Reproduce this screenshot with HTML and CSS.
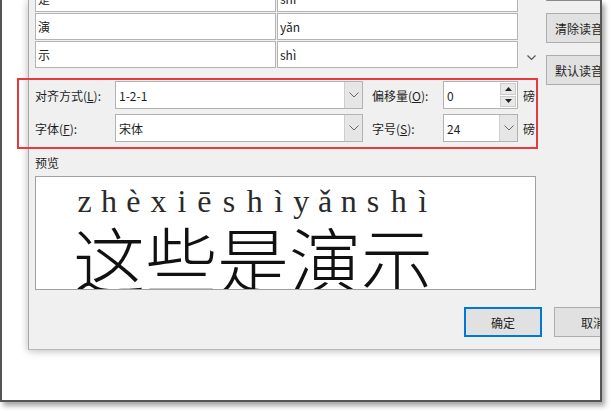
FILE: index.html
```html
<!DOCTYPE html>
<html>
<head>
<meta charset="utf-8">
<link rel="stylesheet" href="styles.css">
</head>
<body>
<div class="frame">
  <div class="dialog">
    <div class="top">
      <div class="grid">
        <div class="cell">是</div><div class="cell">shì</div>
        <div class="cell">演</div><div class="cell">yǎn</div>
        <div class="cell">示</div><div class="cell">shì</div>
      </div>
      <div class="scroll">
        <svg class="chev" width="9" height="6" viewBox="0 0 9 6"><polyline points="0.5,0.5 4.5,4.5 8.5,0.5" fill="none" stroke="#555" stroke-width="1.2"/></svg>
      </div>
      <div class="side">
        <div class="btn side-btn first"></div>
        <div class="btn side-btn">清除读音</div>
        <div class="btn side-btn">默认读音</div>
      </div>
    </div>

    <div class="form">
      <div class="row">
        <span class="label">对齐方式(<u>L</u>):</span>
        <div class="combo wide"><span class="val">1-2-1</span><span class="drop"><svg width="10" height="6" viewBox="0 0 10 6"><polyline points="0.5,0.5 5,5 9.5,0.5" fill="none" stroke="#666" stroke-width="1"/></svg></span></div>
        <span class="label label2">偏移量(<u>O</u>):</span>
        <div class="combo small"><span class="val">0</span><span class="spin"><span class="sb"><svg width="7" height="4" viewBox="0 0 7 4"><polygon points="3.5,0 7,4 0,4" fill="#222"/></svg></span><span class="sb"><svg width="7" height="4" viewBox="0 0 7 4"><polygon points="0,0 7,0 3.5,4" fill="#222"/></svg></span></span></div>
        <span class="unit">磅</span>
      </div>
      <div class="row">
        <span class="label">字体(<u>F</u>):</span>
        <div class="combo wide"><span class="val">宋体</span><span class="drop"><svg width="10" height="6" viewBox="0 0 10 6"><polyline points="0.5,0.5 5,5 9.5,0.5" fill="none" stroke="#666" stroke-width="1"/></svg></span></div>
        <span class="label label2">字号(<u>S</u>):</span>
        <div class="combo small"><span class="val">24</span><span class="drop"><svg width="10" height="6" viewBox="0 0 10 6"><polyline points="0.5,0.5 5,5 9.5,0.5" fill="none" stroke="#666" stroke-width="1"/></svg></span></div>
        <span class="unit">磅</span>
      </div>
    </div>

    <div class="plabel">预览</div>
    <div class="preview">
      <div class="ruby"><div class="py"><span>z</span><span>h</span><span>è</span></div><div class="hz">这</div></div>
      <div class="ruby"><div class="py"><span>x</span><span>i</span><span>ē</span></div><div class="hz">些</div></div>
      <div class="ruby"><div class="py"><span>s</span><span>h</span><span>ì</span></div><div class="hz">是</div></div>
      <div class="ruby"><div class="py"><span>y</span><span>ǎ</span><span>n</span></div><div class="hz">演</div></div>
      <div class="ruby"><div class="py"><span>s</span><span>h</span><span>ì</span></div><div class="hz">示</div></div>
    </div>

    <div class="actions">
      <div class="btn ok">确定</div>
      <div class="btn">取消</div>
    </div>
  </div>
</div>
<div class="mark"></div>
</body>
</html>
```
FILE: styles.css
```css
html, body {
  margin: 0;
  padding: 0;
}
body {
  width: 611px;
  height: 411px;
  overflow: hidden;
  background: #ffffff;
  font-family: "Noto Sans CJK SC", "Noto Sans", sans-serif;
  font-size: 12px;
  color: #1e1e1e;
}
.frame {
  width: 602px;
  height: 402px;
  box-sizing: border-box;
  border: 2px solid #555555;
  border-top: 0;
  background: #ffffff;
  box-shadow: 3px 4px 5px rgba(0, 0, 0, 0.35);
  overflow: hidden;
}
.dialog {
  margin-left: 26px;
  width: 616px;
  height: 350px;
  box-sizing: border-box;
  background: #f0f0f0;
  border-left: 1px solid #a8a8a8;
  border-bottom: 1px solid #b8b8b8;
  box-shadow: 0 1px 8px rgba(0, 0, 0, 0.28);
  padding: 0 12px 0 6px;
  display: flex;
  flex-direction: column;
}
.top {
  display: flex;
  align-items: flex-start;
  height: 83px;
  margin-top: -15px;
  flex-shrink: 0;
}
.grid {
  display: grid;
  grid-template-columns: 241px 241px;
  grid-auto-rows: 27px;
  gap: 1px;
  width: 483px;
}
.cell {
  box-sizing: border-box;
  border: 1px solid #b4b4b4;
  background: #ffffff;
  padding-left: 2px;
  line-height: 25px;
  font-size: 12px;
  color: #222;
}
.scroll {
  width: 28px;
  height: 83px;
  display: flex;
  align-items: flex-end;
  justify-content: center;
}
.chev {
  margin-bottom: 7px;
  margin-right: 2px;
}
.side {
  display: flex;
  flex-direction: column;
  gap: 12px;
  margin-top: -14px;
}
.btn {
  box-sizing: border-box;
  height: 30px;
  background: #e1e1e1;
  border: 1px solid #adadad;
  display: flex;
  align-items: center;
  justify-content: center;
  font-size: 12px;
  color: #1e1e1e;
}
.side-btn {
  width: 66px;
}
.side-btn.first {
  border-bottom-color: #8a8a8a;
}
.form {
  display: flex;
  flex-direction: column;
  gap: 5px;
  margin-top: 13px;
  flex-shrink: 0;
}
.row {
  display: flex;
  align-items: center;
  height: 28px;
}
.label {
  width: 80px;
  white-space: nowrap;
}
.label2 {
  width: 71px;
  margin-left: 9px;
}
.combo {
  box-sizing: border-box;
  height: 28px;
  border: 1px solid #b2b2b2;
  background: #ffffff;
  display: flex;
  align-items: stretch;
}
.wide {
  width: 248px;
}
.small {
  width: 75px;
}
.val {
  flex: 1;
  padding-left: 3px;
  display: flex;
  align-items: center;
}
.drop {
  width: 17px;
  background: #e6e6e6;
  border-left: 1px solid #cfcfcf;
  display: flex;
  align-items: center;
  justify-content: center;
}
.spin {
  width: 16px;
  display: flex;
  flex-direction: column;
  gap: 1px;
  padding: 1px;
}
.sb {
  flex: 1;
  background: #e8e8e8;
  border: 1px solid #cccccc;
  display: flex;
  align-items: center;
  justify-content: center;
}
.unit {
  margin-left: 5px;
}
.plabel {
  margin-top: 13px;
  line-height: 16px;
  flex-shrink: 0;
}
.preview {
  margin-top: 5px;
  width: 501px;
  height: 114px;
  box-sizing: border-box;
  border: 1px solid #a0a0a0;
  background: #ffffff;
  overflow: hidden;
  padding-left: 37px;
  padding-top: 4px;
  display: flex;
  flex-shrink: 0;
}
.ruby {
  width: 72px;
  display: flex;
  flex-direction: column;
}
.py {
  display: flex;
  justify-content: space-around;
  font-family: "Liberation Serif", serif;
  font-size: 32px;
  line-height: 40px;
  color: #2a2a2a;
}
.hz {
  font-family: "Noto Sans CJK SC", sans-serif;
  font-weight: 300;
  font-size: 72px;
  line-height: 72px;
  color: #111;
}
.actions {
  display: flex;
  justify-content: flex-end;
  gap: 12px;
  margin-top: 17px;
}
.actions .btn {
  width: 78px;
}
.ok {
  border: 2px solid #0078d7;
}
.mark {
  position: absolute;
  left: 17px;
  top: 78px;
  width: 521px;
  height: 71px;
  box-sizing: border-box;
  border: 2px solid #e83a3e;
}
```
